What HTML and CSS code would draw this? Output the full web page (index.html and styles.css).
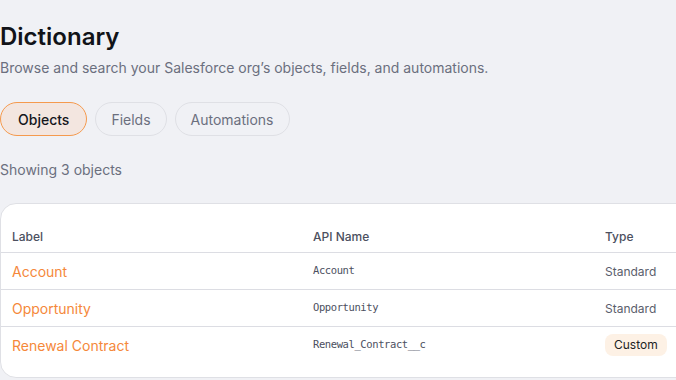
FILE: index.html
```html
<!DOCTYPE html>
<html lang="en">
<head>
    <meta charset="UTF-8">
    <meta name="viewport" content="width=device-width, initial-scale=1.0">
    <title>Dictionary</title>
    <link rel="stylesheet" href="styles.css">
</head>
<body>

    <div class="page">
        <h1>Dictionary</h1>
        <p class="subtitle">Browse and search your Salesforce org’s objects, fields, and automations.</p>

        <!-- Tabs -->
        <div class="tabs">
            <button class="tab active">Objects</button>
            <button class="tab">Fields</button>
            <button class="tab">Automations</button>
        </div>

        <p class="count">Showing 3 objects</p>

        <!-- Objects table -->
        <div class="card">
            <table>
                <thead>
                    <tr>
                        <th class="col-label">Label</th>
                        <th class="col-api">API Name</th>
                        <th class="col-type">Type</th>
                    </tr>
                </thead>
                <tbody>
                    <tr>
                        <td><a href="#">Account</a></td>
                        <td><code>Account</code></td>
                        <td class="type">Standard</td>
                    </tr>
                    <tr>
                        <td><a href="#">Opportunity</a></td>
                        <td><code>Opportunity</code></td>
                        <td class="type">Standard</td>
                    </tr>
                    <tr>
                        <td><a href="#">Renewal Contract</a></td>
                        <td><code>Renewal_Contract__c</code></td>
                        <td class="type"><span class="badge">Custom</span></td>
                    </tr>
                </tbody>
            </table>
        </div>
    </div>

</body>
</html>
```

FILE: styles.css
```css
body {
    font-family: Inter, "Noto Sans", sans-serif;
    background-color: #f0f1f5;
    margin: 0;
    padding: 0;
    overflow: hidden;
}

.page {
    width: 740px;
    padding-top: 22px;
}

h1 {
    font-size: 24px;
    font-weight: 600;
    color: #111318;
    margin: 0;
    line-height: 30px;
}

.subtitle {
    font-size: 14px;
    color: #6b6f7e;
    margin: 6px 0 0;
    line-height: 20px;
}

.tabs {
    display: flex;
    gap: 8px;
    margin-top: 24px;
}

.tab {
    font-family: inherit;
    font-size: 14px;
    color: #6b6f7e;
    background-color: transparent;
    border: 1px solid #dfe0e5;
    border-radius: 17px;
    height: 34px;
    padding: 0 15px;
    cursor: pointer;
}

.tab.active {
    color: #15171c;
    font-weight: 500;
    padding: 0 17px;
    background-color: #f3e6e0;
    border-color: #f59a4e;
}

.count {
    font-size: 14px;
    color: #6b6f7e;
    margin: 24px 0 0;
    line-height: 20px;
}

.card {
    margin-top: 23px;
    background-color: #fff;
    border: 1px solid #dfe0e5;
    border-radius: 16px 0 0 16px;
    padding-top: 16px;
    padding-bottom: 14px;
}

table {
    width: 100%;
    border-collapse: collapse;
}

th {
    font-size: 12px;
    font-weight: 500;
    color: #4c5060;
    text-align: left;
    height: 32px;
    padding: 0 11px;
    border-bottom: 1px solid #dcdde3;
}

td {
    height: 36px;
    padding: 0 11px;
    border-bottom: 1px solid #dcdde3;
    font-size: 14px;
}

tbody tr:last-child td {
    border-bottom: none;
}

.col-label {
    width: 279px;
}

.col-api {
    width: 270px;
}

a {
    color: #f5883a;
    text-decoration: none;
}

code {
    font-family: "DejaVu Sans Mono", monospace;
    font-size: 10.5px;
    letter-spacing: -0.4px;
    color: #4c5060;
    position: relative;
    top: -3px;
}

.type {
    font-size: 12px;
    color: #5a5e6c;
}

.badge {
    display: inline-block;
    background-color: #fdf1e5;
    color: #1c1e24;
    border-radius: 8px;
    padding: 3px 9px;
    line-height: 16px;
}
```
